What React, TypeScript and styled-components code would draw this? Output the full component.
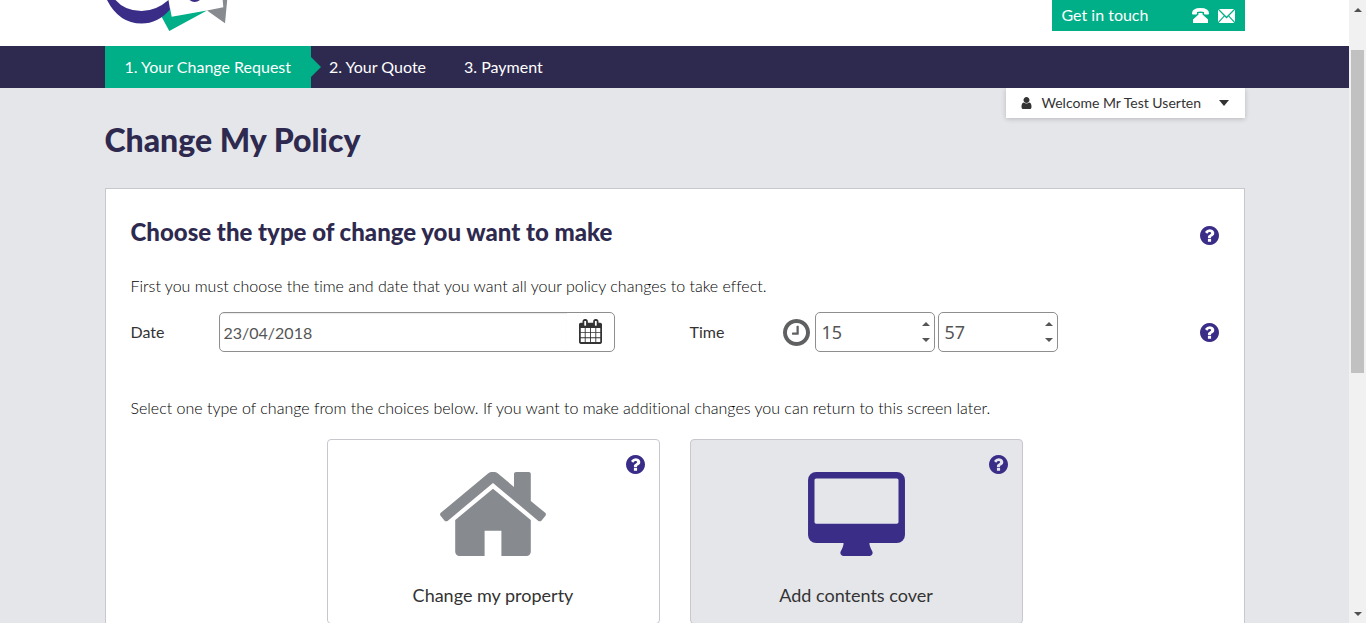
import React from "react";
import styled, { createGlobalStyle } from "styled-components";

const green = "#00ae87";
const navy = "#2e294e";
const purple = "#392d87";
const ink = "#333333";
const mist = "#e5e6ea";

const GlobalStyle = createGlobalStyle`
  *, *::before, *::after { box-sizing: border-box; }
  body {
    margin: 0;
    background: ${mist};
    color: ${ink};
    font: 400 16px/24px Lato, "Liberation Sans", sans-serif;
    font-variant-ligatures: none;
  }
  button { border: 0; padding: 0; background: none; color: inherit; font: inherit; cursor: pointer; }
  input { font: inherit; color: inherit; }
  svg { display: block; }
  h1, h2, p, ol { margin: 0; padding: 0; }
`;

const Viewport = styled.div`
  display: flex;
  height: 100vh;
  overflow: hidden;
`;

const Page = styled.div`
  flex: 1;
  min-width: 0;
  overflow: hidden;
`;

const Container = styled.div`
  max-width: 1140px;
  margin: 0 auto;
`;

const Header = styled.header`
  background: #fff;
`;

const HeaderRow = styled(Container)`
  display: flex;
  justify-content: space-between;
  align-items: flex-start;
  height: 46px;
`;

const Contact = styled.div`
  display: flex;
  align-items: center;
  gap: 9px;
  width: 193px;
  height: 31px;
  padding: 0 10px;
  background: ${green};
  color: #fff;
`;

const ContactLabel = styled.span`
  flex: 1;
  padding-bottom: 1px;
`;

const IconLink = styled.a`
  color: inherit;
`;

const Nav = styled.nav`
  background: ${navy};
`;

const Steps = styled.ol`
  display: flex;
  list-style: none;
`;

const Step = styled.li<{ $active?: boolean }>`
  position: relative;
  padding: 0 ${(p) => (p.$active ? "20px" : "20px 0 18px")};
  background: ${(p) => (p.$active ? green : "transparent")};
  &::after {
    content: "";
    display: ${(p) => (p.$active ? "block" : "none")};
    position: absolute;
    left: 100%;
    top: 11px;
    border: 10px solid transparent;
    border-left-color: ${green};
    border-right: 0;
  }
`;

const StepLink = styled.a`
  display: block;
  color: #fff;
  line-height: 42px;
  text-decoration: none;
`;

const TitleRow = styled(Container)`
  display: flex;
  justify-content: space-between;
  align-items: flex-start;
  height: 100px;
`;

const Title = styled.h1`
  padding-top: 32px;
  color: ${navy};
  font-size: 32px;
  line-height: 40px;
  font-weight: 900;
`;

const UserMenu = styled.button`
  display: flex;
  align-items: center;
  width: 239px;
  height: 30px;
  padding: 0 16px 0 15px;
  background: #fff;
  box-shadow: 0 1px 5px rgba(0, 0, 0, 0.2);
  clip-path: inset(0 -8px -8px -8px);
  font-size: 14px;
`;

const UserName = styled.span`
  flex: 1;
  padding-left: 10px;
  text-align: left;
`;

const Caret = styled.span`
  border: 5px solid transparent;
  border-top: 6px solid ${ink};
  border-bottom: 0;
`;

const Panel = styled.main`
  padding: 24px 25px;
  border: 1px solid #c6c8cd;
  background: #fff;
`;

const PanelHead = styled.div`
  display: flex;
  justify-content: space-between;
  align-items: center;
  height: 45px;
`;

const PanelTitle = styled.h2`
  padding-bottom: 8px;
  color: ${navy};
  font-size: 24px;
  line-height: 32px;
  font-weight: 900;
`;

const BodyText = styled.p`
  color: #000;
  font-weight: 300;
`;

const Intro = styled(BodyText)`
  padding-top: 16px;
`;

const FieldRow = styled.div`
  display: grid;
  grid-template-columns: 88px minmax(0, 396px) 75px 93px auto 1fr;
  align-items: center;
  margin: 14px 0 44px;
`;

const TimeLabel = styled.span`
  grid-column: 4;
`;

const Box = styled.div`
  display: flex;
  height: 40px;
  border: 1px solid #8e8e8e;
  border-radius: 5px;
  background: #fff;
  color: #555;
  overflow: hidden;
`;

const DateInput = styled.input`
  flex: 1;
  min-width: 0;
  padding: 2px 4px 0;
  border: 0;
  background: transparent;
  box-shadow: inset 0 1px 1px rgba(0, 0, 0, 0.08);
  outline-offset: -2px;
`;

const CalendarButton = styled.button`
  display: grid;
  place-items: center;
  width: 47px;
  padding-bottom: 2px;
  color: ${ink};
`;

const TimeFields = styled.div`
  display: flex;
  align-items: center;
  gap: 3px;
  color: #5f6062;
`;

const ClockCell = styled.span`
  width: 29px;
`;

const SpinBox = styled(Box)`
  width: 120px;
`;

const SpinInput = styled.input`
  flex: 1;
  min-width: 0;
  padding: 0 6px;
  border: 0;
  background: transparent;
  font: 400 18px/24px "Noto Sans", sans-serif;
  appearance: textfield;
  &::-webkit-inner-spin-button { appearance: none; margin: 0; }
`;

const SpinButtons = styled.div`
  display: flex;
  flex-direction: column;
  justify-content: center;
  width: 15px;
`;

const SpinButton = styled.button<{ $down?: boolean }>`
  display: grid;
  place-items: center;
  height: 16px;
  &::after {
    content: "";
    border: 4px solid transparent;
    border-width: ${(p) => (p.$down ? "4px 4px 0" : "0 4px 4px")};
    border-top-color: ${(p) => (p.$down ? "#555" : "transparent")};
    border-bottom-color: ${(p) => (p.$down ? "transparent" : "#555")};
  }
`;

const HelpButton = styled.button`
  justify-self: end;
  color: ${purple};
`;

const Choices = styled.div`
  display: grid;
  grid-template-columns: repeat(2, minmax(0, 333px));
  gap: 30px;
  justify-content: center;
  margin-top: 19px;
`;

const Choice = styled.div<{ $selected?: boolean }>`
  position: relative;
  border: 1px solid #c6c8cd;
  border-radius: 4px;
  background: ${(p) => (p.$selected ? mist : "#fff")};
`;

const ChoiceButton = styled.button<{ $selected?: boolean }>`
  display: flex;
  flex-direction: column;
  align-items: center;
  gap: 27px;
  width: 100%;
  padding: 32px 0 16px;
  font-size: 18px;
  svg { color: ${(p) => (p.$selected ? purple : "#878a8f")}; }
`;

const CornerHelp = styled.div`
  position: absolute;
  top: 15px;
  right: 14px;
`;

const ScrollTrack = styled.div`
  display: flex;
  flex-direction: column;
  align-items: center;
  width: 17px;
  padding: 8px 0 7px;
  background: #f1f1f1;
`;

const ScrollArrow = styled.span<{ $down?: boolean }>`
  border: 4px solid transparent;
  border-width: ${(p) => (p.$down ? "4px 4px 0" : "0 4px 4px")};
  border-top-color: ${(p) => (p.$down ? "#505050" : "transparent")};
  border-bottom-color: ${(p) => (p.$down ? "transparent" : "#505050")};
`;

const ScrollRail = styled.div`
  display: flex;
  flex: 1;
  flex-direction: column;
  width: 13px;
`;

const ScrollGap = styled.div<{ $grow: number }>`
  flex: ${(p) => p.$grow} 1 0;
`;

const ScrollThumb = styled.div`
  flex: 323 1 0;
  background: #c1c1c1;
`;

type IconProps = { path: string; box: string; width: number; height: number };

function Icon({ path, box, width, height }: IconProps) {
  return (
    <svg width={width} height={height} viewBox={box} fill="currentColor" aria-hidden="true">
      <path d={path} />
    </svg>
  );
}

const disc =
  "q0 209-103 385.5t-279.5 279.5-385.5 103-385.5-103-279.5-279.5-103-385.5 103-385.5 279.5-279.5 385.5-103 385.5 103 279.5 279.5 103 385.5z";

const paths = {
  help:
    "M1024 1376v-192q0-14-9-23t-23-9h-192q-14 0-23 9t-9 23v192q0 14 9 23t23 9h192q14 0 23-9t9-23zm256-672q0-88-55.5-163t-138.5-116-170-41q-243 0-371 213-15 24 8 42l132 100q7 6 19 6 16 0 25-12 53-68 86-92 34-24 86-24 48 0 85.5 26t37.5 59q0 38-20 61t-68 45q-63 28-115.5 86.5t-52.5 125.5v36q0 14 9 23t23 9h192q14 0 23-9t9-23q0-19 21.5-49.5t54.5-49.5q32-18 49-28.5t46-35 44.5-48 28-60.5 12.5-81zm384 192" +
    disc,
  clock:
    "M1024 544v448q0 14-9 23t-23 9h-320q-14 0-23-9t-9-23v-64q0-14 9-23t23-9h224v-352q0-14 9-23t23-9h64q14 0 23 9t9 23zm416 352q0-148-73-273t-198-198-273-73-273 73-198 198-73 273 73 273 198 198 273 73 273-73 198-198 73-273zm224 0" +
    disc,
  home:
    "M1472 992v480q0 26-19 45t-45 19h-384v-384h-256v384h-384q-26 0-45-19t-19-45v-480q0-1 .5-3t.5-3l575-474 575 474q1 2 1 6zm223-69l-62 74q-8 9-21 11h-3q-13 0-21-7l-692-577-692 577q-12 8-24 7-13-2-21-11l-62-74q-8-10-7-23.5t11-21.5l719-599q32-26 76-26t76 26l244 204v-195q0-14 9-23t23-9h192q14 0 23 9t9 23v408l219 182q10 8 11 21.5t-7 23.5z",
  desktop:
    "M1792 992v-832q0-13-9.5-22.5t-22.5-9.5h-1600q-13 0-22.5 9.5t-9.5 22.5v832q0 13 9.5 22.5t22.5 9.5h1600q13 0 22.5-9.5t9.5-22.5zm128-832v1088q0 66-47 113t-113 47h-544q0 37 16 77.5t32 71 16 43.5q0 26-19 45t-45 19h-512q-26 0-45-19t-19-45q0-14 16-44t32-70 16-78h-544q-66 0-113-47t-47-113v-1088q0-66 47-113t113-47h1600q66 0 113 47t47 113z",
  calendar:
    "M192 1664h288v-288h-288v288zm352 0h320v-288h-320v288zm-352-352h288v-320h-288v320zm352 0h320v-320h-320v320zm-352-384h288v-288h-288v288zm736 736h320v-288h-320v288zm-384-736h320v-288h-320v288zm768 736h288v-288h-288v288zm-384-352h320v-320h-320v320zm-352-864v-288q0-13-9.5-22.5t-22.5-9.5h-64q-13 0-22.5 9.5t-9.5 22.5v288q0 13 9.5 22.5t22.5 9.5h64q13 0 22.5-9.5t9.5-22.5zm736 864h288v-320h-288v320zm-384-384h320v-288h-320v288zm384 0h288v-288h-288v288zm32-480v-288q0-13-9.5-22.5t-22.5-9.5h-64q-13 0-22.5 9.5t-9.5 22.5v288q0 13 9.5 22.5t22.5 9.5h64q13 0 22.5-9.5t9.5-22.5zm384-64v1280q0 52-38 90t-90 38h-1408q-52 0-90-38t-38-90v-1280q0-52 38-90t90-38h128v-96q0-66 47-113t113-47h64q66 0 113 47t47 113v96h384v-96q0-66 47-113t113-47h64q66 0 113 47t47 113v96h128q52 0 90 38t38 90z",
  user:
    "M1536 1399q0 109-62.5 187t-150.5 78h-854q-88 0-150.5-78t-62.5-187q0-85 8.5-160.5t31.5-152 58.5-131 94-89 134.5-34.5q131 128 313 128t313-128q76 0 134.5 34.5t94 89 58.5 131 31.5 152 8.5 160.5zm-256-887q0 159-112.5 271.5t-271.5 112.5-271.5-112.5-112.5-271.5 112.5-271.5 271.5-112.5 271.5 112.5 112.5 271.5z",
  phone:
    "M0 5.5Q0 0 8.5 0T17 5.5Q17 6.5 16 6.5H13Q12 6.500 12 5.500V4Q8.500 3 5 4V5.500Q5 6.500 4 6.500H1Q0 6.500 0 5.500ZM6.500 5h4v1.500L16 11.500V15H1V11.500L6.500 6.500Z",
  mail: "M1 0H16L8.5 7.5ZM0 .8L5.8 6.8 0 13ZM17 .8V13L11.2 6.8ZM6.500 7.600L8.500 9.500 10.500 7.600 16.300 14H.7Z",
};

function Help({ topic }: { topic: string }) {
  return (
    <HelpButton type="button" aria-label={`Help: ${topic}`}>
      <Icon path={paths.help} box="128 128 1536 1536" width={19} height={19} />
    </HelpButton>
  );
}

function Logo() {
  return (
    <svg width="124" height="32" viewBox="105 0 124 32" role="img" aria-label="Home">
      <path fill={green} d="M161.700 17L169.300 31 207 10.500 171.700 16.800 170 8Z" />
      <path fill="#878a8f" d="M207 10.500L225 23.300 227.200 0H222.700L223.300 7.300Z" />
      <path fill={purple} d="M107 0Q119 23.500 141.500 23.500 158 23.500 170 9.500L168.500 0Q156 11 141.500 11 125 11 115.500 0Z" />
      <path fill={purple} d="M189.500 0Q194.500 4 200 0Z" />
    </svg>
  );
}

function Spinner({ label, value, max }: { label: string; value: number; max: number }) {
  return (
    <SpinBox>
      <SpinInput type="number" aria-label={label} defaultValue={value} min={0} max={max} />
      <SpinButtons>
        <SpinButton type="button" aria-label={`Increase ${label}`} />
        <SpinButton type="button" aria-label={`Decrease ${label}`} $down />
      </SpinButtons>
    </SpinBox>
  );
}

export default function App() {
  return (
    <>
      <GlobalStyle />
      <Viewport>
        <Page>
          <Header>
            <HeaderRow>
              <Logo />
              <Contact>
                <ContactLabel>Get in touch</ContactLabel>
                <IconLink href="#phone" aria-label="Phone us">
                  <Icon path={paths.phone} box="0 0 17 15" width={17} height={15} />
                </IconLink>
                <IconLink href="#email" aria-label="Email us">
                  <Icon path={paths.mail} box="0 0 17 14" width={17} height={14} />
                </IconLink>
              </Contact>
            </HeaderRow>
          </Header>
          <Nav>
            <Container>
              <Steps>
                <Step $active>
                  <StepLink href="#change" aria-current="step">1. Your Change Request</StepLink>
                </Step>
                <Step>
                  <StepLink href="#quote">2. Your Quote</StepLink>
                </Step>
                <Step>
                  <StepLink href="#payment">3. Payment</StepLink>
                </Step>
              </Steps>
            </Container>
          </Nav>
          <TitleRow>
            <Title>Change My Policy</Title>
            <UserMenu type="button">
              <Icon path={paths.user} box="256 128 1280 1536" width={11} height={12} />
              <UserName>Welcome Mr Test Userten</UserName>
              <Caret />
            </UserMenu>
          </TitleRow>
          <Container>
            <Panel>
              <PanelHead>
                <PanelTitle>Choose the type of change you want to make</PanelTitle>
                <Help topic="type of change" />
              </PanelHead>
              <Intro>First you must choose the time and date that you want all your policy changes to take effect.</Intro>
              <FieldRow>
                <label htmlFor="date">Date</label>
                <Box>
                  <DateInput id="date" type="text" defaultValue="23/04/2018" />
                  <CalendarButton type="button" aria-label="Open calendar">
                    <Icon path={paths.calendar} box="64 0 1664 1792" width={23} height={25} />
                  </CalendarButton>
                </Box>
                <TimeLabel>Time</TimeLabel>
                <TimeFields>
                  <ClockCell>
                    <Icon path={paths.clock} box="128 128 1536 1536" width={27} height={27} />
                  </ClockCell>
                  <Spinner label="hour" value={15} max={23} />
                  <Spinner label="minute" value={57} max={59} />
                </TimeFields>
                <Help topic="date and time" />
              </FieldRow>
              <BodyText>
                Select one type of change from the choices below. If you want to make additional changes you can
                return to this screen later.
              </BodyText>
              <Choices>
                <Choice>
                  <ChoiceButton type="button">
                    <Icon path={paths.home} box="89 256 1614 1280" width={106} height={84} />
                    Change my property
                  </ChoiceButton>
                  <CornerHelp>
                    <Help topic="change my property" />
                  </CornerHelp>
                </Choice>
                <Choice $selected>
                  <ChoiceButton type="button" $selected>
                    <Icon path={paths.desktop} box="0 0 1920 1664" width={97} height={84} />
                    Add contents cover
                  </ChoiceButton>
                  <CornerHelp>
                    <Help topic="add contents cover" />
                  </CornerHelp>
                </Choice>
              </Choices>
            </Panel>
          </Container>
        </Page>
        <ScrollTrack aria-hidden="true">
          <ScrollArrow />
          <ScrollRail>
            <ScrollGap $grow={38} />
            <ScrollThumb />
            <ScrollGap $grow={239} />
          </ScrollRail>
          <ScrollArrow $down />
        </ScrollTrack>
      </Viewport>
    </>
  );
}
